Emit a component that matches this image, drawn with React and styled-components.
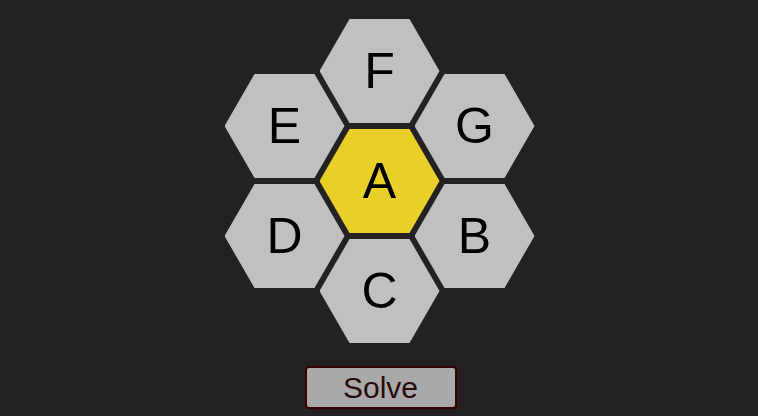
import React from "react";
import styled, { createGlobalStyle } from "styled-components";

const Global = createGlobalStyle`
  html, body { margin: 0; padding: 0; background: #232122; }
  body { font-family: "Liberation Sans", Arial, sans-serif; }
`;

const Page = styled.div`
  width: 758px;
  height: 416px;
  box-sizing: border-box;
  padding-top: 19px;
  display: flex;
  flex-direction: column;
  align-items: center;
  background: #232122;
  overflow: hidden;
`;

const Hive = styled.div`
  display: flex;
  align-items: center;
  justify-content: center;
  margin-left: 1px;
`;

const Column = styled.div`
  display: flex;
  flex-direction: column;
  gap: 6px;
  margin: 0 -12.5px;
`;

const Hex = styled.div`
  width: 120px;
  height: 104px;
  clip-path: polygon(25% 0, 75% 0, 100% 50%, 75% 100%, 25% 100%, 0 50%);
  background: ${(p) => (p.$center ? "#e9cf27" : "#c0c0c0")};
  display: flex;
  align-items: center;
  justify-content: center;
  font-size: 50px;
  color: #000;
  user-select: none;
`;

const SolveButton = styled.button`
  margin-top: 23px;
  margin-left: 3px;
  width: 152px;
  height: 43px;
  box-sizing: border-box;
  background: #a9a9a9;
  border: 2px solid #350202;
  border-radius: 4px;
  font-family: "Liberation Sans", Arial, sans-serif;
  font-size: 30px;
  color: #2a0b0b;
  padding: 0;
  display: flex;
  align-items: center;
  justify-content: center;
`;

export default function App() {
  return (
    <>
      <Global />
      <Page>
        <Hive>
          <Column>
            <Hex>E</Hex>
            <Hex>D</Hex>
          </Column>
          <Column>
            <Hex>F</Hex>
            <Hex $center>A</Hex>
            <Hex>C</Hex>
          </Column>
          <Column>
            <Hex>G</Hex>
            <Hex>B</Hex>
          </Column>
        </Hive>
        <SolveButton>Solve</SolveButton>
      </Page>
    </>
  );
}
